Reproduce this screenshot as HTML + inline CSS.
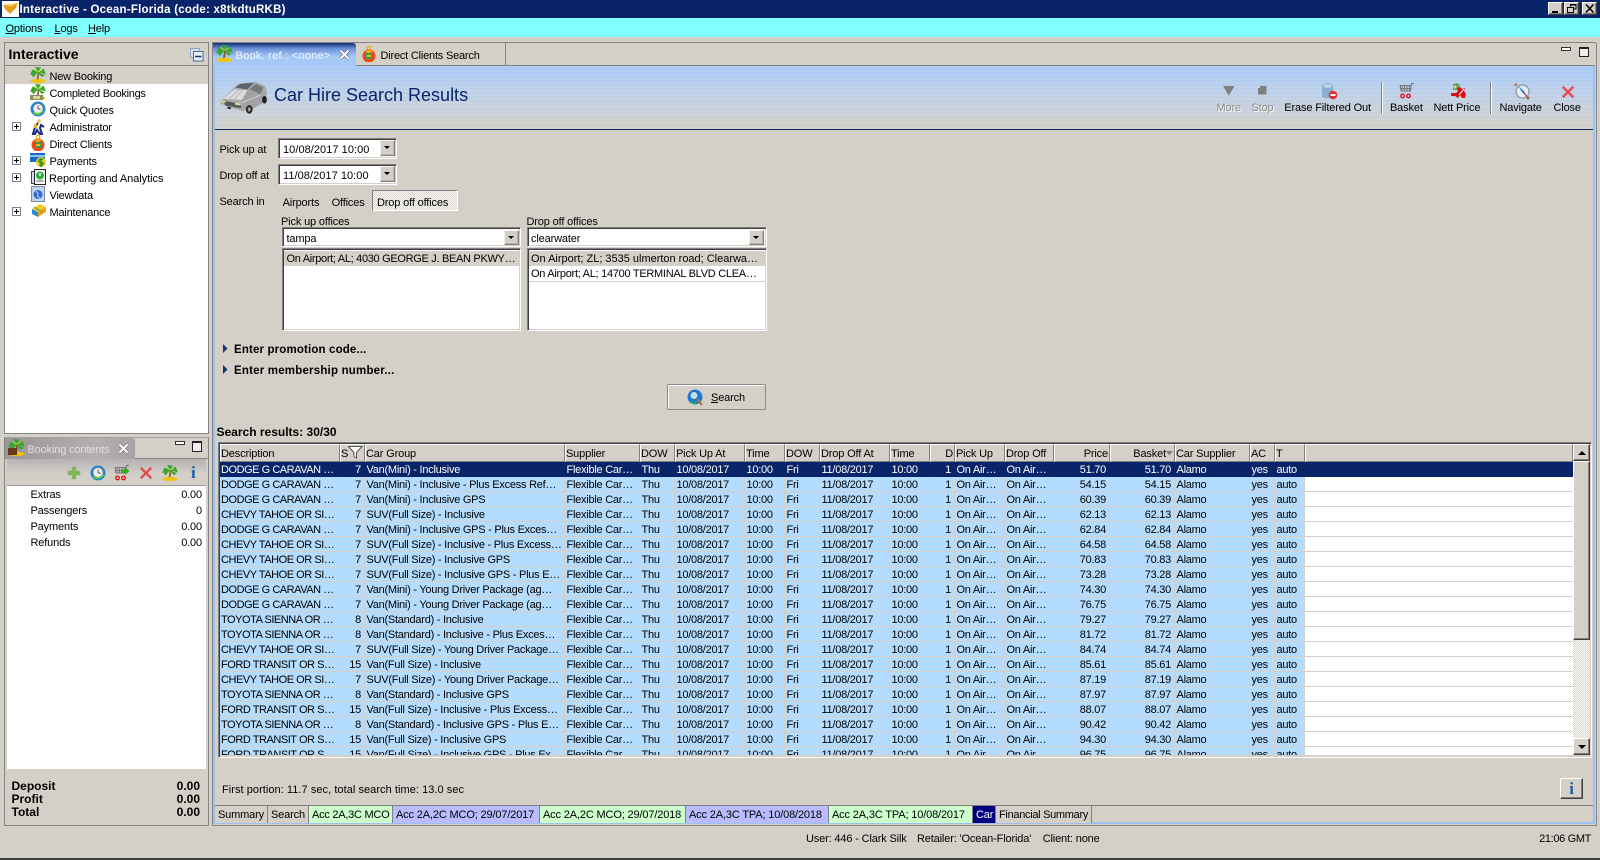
<!DOCTYPE html>
<html><head><meta charset="utf-8"><title>Interactive</title>
<style>
html,body{margin:0;padding:0;width:1600px;height:860px;overflow:hidden;background:#d4d0c8}
body{position:relative;font:11px/16px "Liberation Sans",sans-serif;color:#000;letter-spacing:-.15px}
.a{position:absolute;white-space:nowrap}
.b{font-weight:bold;letter-spacing:0;line-height:14px}
.btn{position:absolute;background:#d4d0c8;box-sizing:border-box;border:1px solid;border-color:#fff #404040 #404040 #fff;box-shadow:inset -1px -1px 0 #808080}
.sb{border-color:#f4f2ee #808080 #808080 #f4f2ee;box-shadow:inset -1px -1px 0 #b8b4ac}
.inset{position:absolute;box-sizing:border-box;border:1px solid;border-color:#808080 #fff #fff #808080;box-shadow:inset 1px 1px 0 #404040,inset -1px -1px 0 #d4d0c8;background:#fff}
.tri{position:absolute;width:0;height:0;border:3px solid transparent;border-top:3px solid #000;border-bottom:0}
.plus{position:absolute;left:12px;width:9px;height:9px;box-sizing:border-box;border:1px solid #808080;background:#fff}
.plus:before{content:"";position:absolute;left:1px;top:3px;width:5px;height:1px;background:#000}
.plus:after{content:"";position:absolute;left:3px;top:1px;width:1px;height:5px;background:#000}
.h{position:absolute;top:444px;height:18px;box-sizing:border-box;border:1px solid;border-color:#fff #808080 #808080 #fff;padding:1px 1px 0 0;line-height:17px;overflow:hidden;white-space:nowrap;background:#d4d0c8}
.grid{position:absolute;left:220px;top:462px;width:1353px;height:293px;overflow:hidden;background:#fff}
table{border-collapse:separate;border-spacing:0;table-layout:fixed;width:1353px;background:#fff}
td{height:12px;padding:2px 0 0 1.5px;line-height:12px;letter-spacing:-.25px;border-right:1px solid #d4d0c8;border-bottom:1px solid #d4d0c8;background:#b4dcff;overflow:hidden;white-space:nowrap}
td:first-child{letter-spacing:-.46px;padding-left:1px}
td.r{text-align:right;padding:2px 3px 0 0}
td.e{background:#fff;border-right:0}
tr.s td{background:#0a246a;color:#fff;border-color:#0a246a}
.bt{position:absolute;top:806px;height:17px;box-sizing:border-box;border-right:1px solid #808080;line-height:18px;padding-left:3px;white-space:nowrap;overflow:hidden}
.tb{position:absolute;top:100px;white-space:nowrap}
.dis{color:#8a8a8a;text-shadow:1px 1px 0 #fff}
</style></head><body>
<svg width="0" height="0" style="position:absolute">
<defs>
<symbol id="palm" viewBox="0 0 16 16"><path d="M8.500 5Q8.500 9 7.200 13" stroke="#8a5a20" stroke-width="1.700" fill="none"/><path d="M8 5L0 8 2.500 2.500ZM8 5L5 0 11 .5ZM8 5L16 7.500 13.500 1.500ZM8 5L11.500 10 15 8.500ZM8 5L3.500 10.500 1.500 7.500Z" fill="#3aa52e"/><path d="M8 5L4 2M8 5L12 3" stroke="#a8d84e"/><ellipse cx="8" cy="14" rx="7.500" ry="2" fill="#f2c400"/></symbol>
<symbol id="clock" viewBox="0 0 16 16"><circle cx="8" cy="8" r="7.500" fill="#1c86e0"/><circle cx="8" cy="7.500" r="5" fill="#eee" stroke="#777" stroke-width=".7"/><path d="M8 4.500V7.500L10.500 8.500" stroke="#555" fill="none"/><path d="M2.500 12Q8 17 14.500 10L13 9Q8 14 4 10.500Z" fill="#6cc03a"/></symbol>
<symbol id="redx" viewBox="0 0 16 16"><path d="M3 1L8 6 13 1 15 3 10 8 15 13 13 15 8 10 3 15 1 13 6 8 1 3Z" fill="#e8434a" stroke="#c9a0a0" stroke-width=".6"/></symbol>
<symbol id="cart" viewBox="0 0 16 16"><path d="M15 .5H12.500L11.500 8H2M1 2.500H12.500M2 5.500H12M3 2.500V8M5.500 2.500V8M8 2.500V8M10.500 2.500V8M1 2.500L2 8" stroke="#777" fill="none"/><circle cx="3.500" cy="13" r="1.800" fill="none" stroke="#e00000" stroke-width="1.200"/><circle cx="9.500" cy="13" r="1.800" fill="none" stroke="#e00000" stroke-width="1.200"/></symbol>
<symbol id="client" viewBox="0 0 16 16"><circle cx="8" cy="2.200" r="1.800" fill="none" stroke="#e8a800" stroke-width="1.100"/><circle cx="8" cy="10" r="6.500" fill="#ef4b16"/><rect x="5" y="7" width="6" height="6" fill="#3c9a50"/><rect x="6" y="9" width="4" height="2" fill="#e8c010"/><ellipse cx="8" cy="5.500" rx="3" ry="1.500" fill="#f4b000"/></symbol>
</defs></svg>

<!-- title bar -->
<div class="a" style="left:0;top:0;width:1600px;height:18px;background:#0a246a"></div>
<div class="a" style="left:2px;top:1px;width:17px;height:16px;background:#fff"></div>
<svg class="a" style="left:3px;top:3px" width="15" height="12"><path d="M0 2L14.500 0 13 5 7 11 2 6Z" fill="#e89a18"/><path d="M1 2L14 .5 8 3.500Z" fill="#f6d070"/></svg>
<div class="a b" style="left:19.500px;top:3px;color:#fff;font-size:11.500px;line-height:14px;letter-spacing:.23px">Interactive - Ocean-Florida (code: x8tkdtuRKB)</div>
<div class="btn" style="left:1548px;top:2px;width:15px;height:13px"><div class="a" style="left:3px;top:8px;width:6px;height:2px;background:#000"></div></div>
<div class="btn" style="left:1564px;top:2px;width:15px;height:13px"><svg class="a" style="left:2px;top:1px" width="10" height="9"><path d="M3.500 2.500V.5H9V5H7M.5 3.500H6.500V8.500H.5Z" fill="none" stroke="#000"/><path d="M3 1H9M0 3.500H6.500" stroke="#000"/></svg></div>
<div class="btn" style="left:1582px;top:2px;width:15px;height:13px"><svg class="a" style="left:2px;top:1px" width="10" height="9"><path d="M1 .5L8.500 8.500M8.500 .5L1 8.500" stroke="#000" stroke-width="1.500"/></svg></div>

<!-- menu -->
<div class="a" style="left:0;top:18px;width:1600px;height:19px;background:#80ffff"></div>
<div class="a" style="left:5.500px;top:21px"><u>O</u>ptions</div>
<div class="a" style="left:54.500px;top:21px"><u>L</u>ogs</div>
<div class="a" style="left:88px;top:21px"><u>H</u>elp</div>

<!-- left panel -->
<div class="a" style="left:4px;top:42px;width:203px;height:390px;border:1px solid #848484;background:#fff"></div>
<div class="a" style="left:5px;top:43px;width:203px;height:22px;background:#d4d0c8;border-bottom:1px solid #848484"></div>
<div class="a b" style="left:8.500px;top:47px;font-size:14px;line-height:15px">Interactive</div>
<svg class="a" style="left:190px;top:48px" width="14" height="14"><rect x=".5" y=".5" width="9" height="9" fill="#d8e4f0" stroke="#8aa4c8"/><rect x="3.500" y="3.500" width="9.500" height="9.500" fill="#e8eef6" stroke="#4a6a9a"/><path d="M5 8.500H11.500" stroke="#16346a" stroke-width="1.500"/></svg>
<div class="a" style="left:5px;top:66px;width:203px;height:18px;background:#d4d0c8"></div>
<svg class="a" style="left:30px;top:67px" width="16" height="16"><use href="#palm"/></svg>
<svg class="a" style="left:30px;top:84px" width="16" height="16"><use href="#palm"/><rect x="0" y="11" width="13" height="5" fill="#8a8a5c"/><rect x="3" y="12" width="7" height="3" fill="#d0d8a0"/></svg>
<svg class="a" style="left:30px;top:101px" width="16" height="16"><use href="#clock"/></svg>
<svg class="a" style="left:31px;top:119px" width="16" height="16"><path d="M7 4L4 8 2 15H4L6 11 9 15H11L9 9 10 6 13 8" stroke="#1c2a7a" stroke-width="2" fill="none"/><circle cx="8" cy="2" r="1.800" fill="#e8c070"/><rect x="3" y="5" width="3" height="4" fill="#e0b030"/></svg>
<svg class="a" style="left:30px;top:135px" width="16" height="16"><use href="#client"/></svg>
<svg class="a" style="left:30px;top:152px" width="16" height="17"><rect x="0" y="1" width="15" height="9" fill="#1a6cc8"/><rect x="0" y="3" width="15" height="2" fill="#8ac4f0"/><circle cx="11" cy="10" r="5" fill="#e8d020"/><path d="M13 7.500H10Q8.500 7.500 9 9.500Q9.500 10.500 11 10.500Q13 10.500 13 12Q13 13 11 13H9M11 6V15" stroke="#1c8c28" fill="none" stroke-width="1.300"/></svg>
<svg class="a" style="left:31px;top:169px" width="16" height="17"><rect x=".5" y="2.500" width="6" height="12" fill="#d0e0f0" stroke="#445"/><rect x="3.500" y=".5" width="11" height="15" fill="#f4f4f4" stroke="#222"/><circle cx="9" cy="6.500" r="4" fill="#30b040"/><path d="M9 4V7" stroke="#fff" stroke-width="1.500"/><path d="M5.500 12H12.500" stroke="#666"/></svg>
<svg class="a" style="left:31px;top:186px" width="15" height="17"><rect x=".5" y=".5" width="13" height="15" fill="#c4d4ea" stroke="#7a8aaa"/><circle cx="7" cy="8.500" r="4.500" fill="#3a6cd0"/><path d="M5 5.500Q8 7 6.500 10L9 12.500" stroke="#a0d8ff" fill="none"/></svg>
<svg class="a" style="left:31px;top:203px" width="16" height="16"><path d="M1 6L9 1 15 4 7 9Z" fill="#f0c828"/><path d="M1 6L7 9V14L1 11Z" fill="#2a8ad0"/><path d="M7 9L15 4V9L7 14Z" fill="#e8a020"/><path d="M3 4L11 9" stroke="#58a830"/></svg>
<div class="plus" style="top:122px"></div><div class="plus" style="top:156px"></div><div class="plus" style="top:173px"></div><div class="plus" style="top:207px"></div>
<div class="a" style="left:49.500px;top:69px;letter-spacing:-.2px">New Booking</div>
<div class="a" style="left:49.500px;top:86px;letter-spacing:-.3px">Completed Bookings</div>
<div class="a" style="left:49.500px;top:103px;letter-spacing:-.2px">Quick Quotes</div>
<div class="a" style="left:49.500px;top:120px;letter-spacing:-.2px">Administrator</div>
<div class="a" style="left:49.500px;top:137px;letter-spacing:-.2px">Direct Clients</div>
<div class="a" style="left:49.500px;top:154px;letter-spacing:-.2px">Payments</div>
<div class="a" style="left:49px;top:171px;letter-spacing:-.05px">Reporting and Analytics</div>
<div class="a" style="left:49.500px;top:188px;letter-spacing:-.2px">Viewdata</div>
<div class="a" style="left:49.500px;top:205px;letter-spacing:-.2px">Maintenance</div>

<!-- booking contents -->
<div class="a" style="left:4px;top:437px;width:203px;height:387px;border:1px solid #848484;border-top-color:#a0a0a0;background:#d4d0c8"></div>
<div class="a" style="left:5px;top:438px;width:130px;height:21px;background:linear-gradient(90deg,#9a9696,#b4b0b0 70%,#a8a4a4);border-top-right-radius:3px"></div>
<div class="a" style="left:135px;top:458px;width:73px;height:1px;background:#848484"></div>
<svg class="a" style="left:8px;top:439px" width="17" height="17"><use href="#palm"/><rect x="0" y="9" width="9" height="7" fill="#6a3a1a"/></svg>
<div class="a" style="left:27.500px;top:442px;color:#e0dedc">Booking contents</div>
<svg class="a" style="left:118px;top:443px" width="11" height="11"><path d="M1.500 1.500L9.500 9.500M9.500 1.500L1.500 9.500" stroke="#777" stroke-width="3.400"/><path d="M1.500 1.500L9.500 9.500M9.500 1.500L1.500 9.500" stroke="#fff" stroke-width="2"/></svg>
<div class="a" style="left:175px;top:441px;width:8px;height:2px;border:1px solid #333;background:#fff"></div>
<div class="a" style="left:192px;top:441px;width:8px;height:8px;border:1px solid #222;border-top-width:2px;background:#eee"></div>
<div class="a" style="left:7px;top:459px;width:199px;height:26px;background:linear-gradient(#b4b2b4,#d4d0c8 60%);border-bottom:1px solid #9a9a9a"></div>
<svg class="a" style="left:67px;top:466px" width="14" height="14"><path d="M5 1H9V5H13V9H9V13H5V9H1V5H5Z" fill="#7ab850" stroke="#9aa88a" stroke-width=".6"/></svg>
<svg class="a" style="left:90px;top:465px" width="16" height="16"><use href="#clock"/></svg>
<svg class="a" style="left:114px;top:465px" width="16" height="16"><use href="#cart"/><path d="M7 4.500H11V2L15.500 6 11 10V7.500H7Z" fill="#2cb020"/></svg>
<svg class="a" style="left:139px;top:466px" width="14" height="14"><use href="#redx"/></svg>
<svg class="a" style="left:162px;top:465px" width="16" height="16"><use href="#palm"/></svg>
<div class="a" style="left:191px;top:465px;width:7px;height:16px;color:#1a5caa;font:bold 17px/16px 'Liberation Serif',serif">i</div>
<div class="a" style="left:7px;top:486px;width:199px;height:283px;background:#fff"></div>
<div class="a" style="left:30.500px;top:487px">Extras</div><div class="a" style="right:1398px;top:487px">0.00</div>
<div class="a" style="left:30.500px;top:503px">Passengers</div><div class="a" style="right:1398px;top:503px">0</div>
<div class="a" style="left:30.500px;top:519px">Payments</div><div class="a" style="right:1398px;top:519px">0.00</div>
<div class="a" style="left:30.500px;top:535px">Refunds</div><div class="a" style="right:1398px;top:535px">0.00</div>
<div class="a b" style="left:11.500px;top:779px;font-size:12px">Deposit</div><div class="a b" style="right:1400px;top:779px;font-size:12px">0.00</div>
<div class="a b" style="left:11.500px;top:792px;font-size:12px">Profit</div><div class="a b" style="right:1400px;top:792px;font-size:12px">0.00</div>
<div class="a b" style="left:11.500px;top:805px;font-size:12px">Total</div><div class="a b" style="right:1400px;top:805px;font-size:12px">0.00</div>

<!-- right panel -->
<div class="a" style="left:212px;top:42px;width:1383px;height:782px;border:1px solid #848484;border-top-right-radius:3px;background:#d4d0c8"></div>
<div class="a" style="left:213px;top:65px;width:1382px;height:1px;background:#848484"></div>
<div class="a" style="left:213px;top:66px;width:2px;height:758px;background:#9cc0f0"></div>
<div class="a" style="left:1593px;top:66px;width:2px;height:758px;background:#9cc0f0"></div>
<div class="a" style="left:213px;top:822px;width:1382px;height:2px;background:#9cc0f0"></div>
<div class="a" style="left:213px;top:43px;width:143px;height:23px;background:linear-gradient(#0f2d78,#6f93d8 25%,#a6c8f6 60%);border-top-right-radius:3px"></div>
<svg class="a" style="left:216px;top:45px" width="17" height="17"><use href="#palm"/></svg>
<div class="a" style="left:235.500px;top:48px;color:#f4f7fc;letter-spacing:.25px">Book. ref.: &lt;none&gt;</div>
<svg class="a" style="left:339px;top:49px" width="11" height="11"><path d="M1.500 1.500L9.500 9.500M9.500 1.500L1.500 9.500" stroke="#667" stroke-width="3.400"/><path d="M1.500 1.500L9.500 9.500M9.500 1.500L1.500 9.500" stroke="#fff" stroke-width="2"/></svg>
<div class="a" style="left:356px;top:43px;width:149px;height:22px;border-right:1px solid #848484"></div>
<svg class="a" style="left:361px;top:46px" width="16" height="16"><use href="#client"/></svg>
<div class="a" style="left:380.500px;top:48px;letter-spacing:-.2px">Direct Clients Search</div>
<div class="a" style="left:1561px;top:47px;width:8px;height:2px;border:1px solid #333;background:#fff"></div>
<div class="a" style="left:1579px;top:47px;width:8px;height:7px;border:1px solid #222;border-top-width:2px;background:#eee"></div>

<!-- banner -->
<div class="a" style="left:215px;top:66px;width:1378px;height:63px;background:repeating-linear-gradient(rgba(255,255,255,.07) 0 2px,rgba(0,0,0,0) 2px 4px),linear-gradient(#a6c8f6,#bcd0ea 40%,#d4d0c8)"></div>
<div class="a" style="left:215px;top:129px;width:1378px;height:1px;background:#0a246a"></div>
<svg class="a" style="left:216px;top:73px" width="57" height="48" viewBox="0 0 60 50"><path d="M5 30L18 16 24 11 42 9 52 14 54 20 52 30 38 38 28 40 12 35 5 32Z" fill="#a8aaac"/><path d="M20 15L26 11 40 10 33 17Z" fill="#5c6268"/><path d="M35 17L42 11 50 15 47 22Z" fill="#74797f"/><path d="M8 27L19 17 33 18 27 28Z" fill="#dcdcdc"/><path d="M14 27L24 17.500M19 28L28 18" stroke="#b4b6b8" fill="none"/><path d="M27 30L34 18 47 22 52 20 52 29 38 36 29 38Z" fill="#a0a2a4"/><path d="M27 31L47 23" stroke="#d0d2d4"/><path d="M7 29L26 32 27 37 10 34Z" fill="#55585c"/><path d="M6 28.500L10 29.500 10 31.500 6 30.500Z" fill="#e8d860"/><path d="M20 31L26 32 26 34 20 33Z" fill="#dce8a0"/><ellipse cx="35" cy="38" rx="3.500" ry="4.500" fill="#222"/><ellipse cx="35" cy="38" rx="1.600" ry="2.400" fill="#999"/><ellipse cx="51" cy="28" rx="2.500" ry="4" fill="#222"/><path d="M12 35L16 36 15 38 12 37Z" fill="#222"/></svg>
<div class="a" style="left:274px;top:85px;font-size:18px;line-height:20px;color:#0a246a;letter-spacing:0">Car Hire Search Results</div>

<svg class="a" style="left:1223px;top:86px" width="12" height="10"><path d="M0 0H11.500L5.800 9.500Z" fill="#808080"/></svg>
<svg class="a" style="left:1258px;top:86px" width="9" height="9"><rect width="8.500" height="8.500" fill="#808080"/><rect width="2" height="2" fill="#d8d8d8"/></svg>
<svg class="a" style="left:1321px;top:83px" width="17" height="17"><path d="M1 3V14Q6 16.500 12 14V3Z" fill="#8eb0d0"/><ellipse cx="6.500" cy="3" rx="5.500" ry="2.300" fill="#b8d4ea" stroke="#7a98b8" stroke-width=".6"/><circle cx="12" cy="12" r="4.300" fill="#e03030"/><rect x="9.500" y="11" width="5" height="2" fill="#fff"/></svg>
<svg class="a" style="left:1399px;top:83px" width="16" height="16"><use href="#cart"/></svg>
<svg class="a" style="left:1450px;top:83px" width="17" height="16"><path d="M3 1Q8-1 10 2L8 7H3Z" fill="#6aa050"/><circle cx="5" cy="4" r="1.500" fill="#c8d8a0"/><path d="M7 5L10 4 12 6 15 5 14 8 16 11 15 15H12L10 12 8 15 5 13H1V10H6L8 8Z" fill="#e00c14"/><path d="M9 12L14 6" stroke="#fff"/></svg>
<svg class="a" style="left:1514px;top:83px" width="17" height="17"><circle cx="8.500" cy="8.500" r="6.500" fill="#e4ecf4" stroke="#8a9aaa" stroke-width="1.300"/><path d="M4 3L8 9 13 14 9 7Z" fill="#2a88d8"/><path d="M9 8L13 14" stroke="#d02020"/><circle cx="1.800" cy="1.800" r="1.500" fill="#b08a40"/><circle cx="14" cy="15" r="1.500" fill="#807040"/></svg>
<svg class="a" style="left:1561px;top:85px" width="14" height="14"><use href="#redx"/></svg>
<div class="tb dis" style="left:1216.500px">More</div>
<div class="tb dis" style="left:1251.500px">Stop</div>
<div class="tb" style="left:1284.300px">Erase Filtered Out</div>
<div class="tb" style="left:1390px">Basket</div>
<div class="tb" style="left:1433.500px">Nett Price</div>
<div class="tb" style="left:1499.500px">Navigate</div>
<div class="tb" style="left:1553.500px">Close</div>
<div class="a" style="left:1381px;top:82px;width:1px;height:32px;background:#808080;border-right:1px solid #fff"></div>
<div class="a" style="left:1490px;top:82px;width:1px;height:32px;background:#808080;border-right:1px solid #fff"></div>

<!-- form -->
<div class="a" style="left:219.500px;top:142px">Pick up at</div>
<div class="a" style="left:219.500px;top:168px">Drop off at</div>
<div class="a" style="left:219.500px;top:194px">Search in</div>
<div class="inset" style="left:278px;top:138px;width:119px;height:21px"></div>
<div class="a" style="left:283px;top:142px;letter-spacing:.05px">10/08/2017 10:00</div>
<div class="btn sb" style="left:380px;top:140px;width:15px;height:16px"><div class="tri" style="left:3px;top:5px"></div></div>
<div class="inset" style="left:278px;top:164px;width:119px;height:21px"></div>
<div class="a" style="left:283px;top:168px;letter-spacing:.05px">11/08/2017 10:00</div>
<div class="btn sb" style="left:380px;top:166px;width:15px;height:16px"><div class="tri" style="left:3px;top:5px"></div></div>
<div class="a" style="left:282.600px;top:195px">Airports</div>
<div class="a" style="left:331.600px;top:195px">Offices</div>
<div class="a" style="left:372px;top:190px;width:86px;height:21px;box-sizing:border-box;border:1px solid;border-color:#808080 #fff #fff #808080;background:repeating-conic-gradient(#fff 0 25%,#d4d0c8 0 50%) 0 0/2px 2px"></div>
<div class="a" style="left:377px;top:195px">Drop off offices</div>
<div class="a" style="left:281px;top:214px">Pick up offices</div>
<div class="a" style="left:526.500px;top:214px">Drop off offices</div>
<div class="inset" style="left:282px;top:227px;width:239px;height:20px"></div>
<div class="a" style="left:286.500px;top:231px">tampa</div>
<div class="btn sb" style="left:504px;top:230px;width:15px;height:15px"><div class="tri" style="left:3px;top:5px"></div></div>
<div class="inset" style="left:527px;top:227px;width:240px;height:20px"></div>
<div class="a" style="left:531px;top:231px">clearwater</div>
<div class="btn sb" style="left:749px;top:230px;width:15px;height:15px"><div class="tri" style="left:3px;top:5px"></div></div>
<div class="inset" style="left:282px;top:248px;width:239px;height:83px"></div>
<div class="a" style="left:284px;top:251px;width:235px;height:15px;background:#d4d0c8"></div>
<div class="a" style="left:286.500px;top:251px;letter-spacing:-.31px">On Airport; AL; 4030 GEORGE J. BEAN PKWY…</div>
<div class="inset" style="left:527px;top:248px;width:240px;height:83px"></div>
<div class="a" style="left:529px;top:251px;width:236px;height:15px;background:#d4d0c8"></div>
<div class="a" style="left:531px;top:251px;letter-spacing:-.01px">On Airport; ZL; 3535 ulmerton road; Clearwa…</div>
<div class="a" style="left:529px;top:281px;width:236px;height:1px;background:#d4d0c8"></div>
<div class="a" style="left:531px;top:266px;letter-spacing:-.28px">On Airport; AL; 14700 TERMINAL BLVD CLEA…</div>

<svg class="a" style="left:222px;top:344px" width="6" height="9"><path d="M1 0L5.500 4.500 1 9Z" fill="#16346a"/></svg>
<div class="a b" style="left:234px;top:343px;font-size:11.500px;letter-spacing:.15px">Enter promotion code...</div>
<svg class="a" style="left:222px;top:365px" width="6" height="9"><path d="M1 0L5.500 4.500 1 9Z" fill="#16346a"/></svg>
<div class="a b" style="left:234px;top:364px;font-size:11.500px;letter-spacing:.2px">Enter membership number...</div>

<div class="a" style="left:667px;top:384px;width:99px;height:26px;box-sizing:border-box;border:1px solid #8a8a8a;border-radius:2px;box-shadow:inset 1px 1px 0 #fff"></div>
<svg class="a" style="left:687px;top:389px" width="17" height="17"><circle cx="8" cy="8" r="7.500" fill="#1c7ed8"/><circle cx="7" cy="6.500" r="4" fill="#bfe0f4" stroke="#2a6a9a"/><path d="M10 10L15 16" stroke="#b07828" stroke-width="2.200"/><path d="M3 13Q6 15 9 14" stroke="#40b040" stroke-width="1.600" fill="none"/></svg>
<div class="a" style="left:711px;top:390px"><u>S</u>earch</div>

<div class="a b" style="left:216.500px;top:425px;font-size:12px">Search results: 30/30</div>

<!-- grid -->
<div class="inset" style="left:218px;top:442px;width:1374px;height:316px;background:#d4d0c8"></div>
<div class="h" style="left:220px;width:120px">Description</div>
<div class="h" style="left:340px;width:25px">S<svg style="position:absolute;left:7px;top:1px" width="15" height="13"><path d="M.5.5H14L8.500 6.500V12L6 10.500V6.500Z" fill="#fff" stroke="#555"/></svg></div>
<div class="h" style="left:365px;width:200px">Car Group</div>
<div class="h" style="left:565px;width:75px">Supplier</div>
<div class="h" style="left:640px;width:35px">DOW</div>
<div class="h" style="left:675px;width:70px">Pick Up At</div>
<div class="h" style="left:745px;width:40px">Time</div>
<div class="h" style="left:785px;width:35px">DOW</div>
<div class="h" style="left:820px;width:70px">Drop Off At</div>
<div class="h" style="left:890px;width:40px">Time</div>
<div class="h" style="left:930px;width:25px;text-align:right">D</div>
<div class="h" style="left:955px;width:50px">Pick Up</div>
<div class="h" style="left:1005px;width:49px">Drop Off</div>
<div class="h" style="left:1054px;width:56px;text-align:right">Price</div>
<div class="h" style="left:1110px;width:65px;text-align:right;padding-right:8px">Basket<svg style="position:absolute;right:1px;top:6px" width="7" height="5"><path d="M0 0H7L3.500 4.500Z" fill="#808080"/></svg></div>
<div class="h" style="left:1175px;width:75px">Car Supplier</div>
<div class="h" style="left:1250px;width:25px">AC</div>
<div class="h" style="left:1275px;width:30px">T</div>
<div class="h" style="left:1305px;width:268px"></div>
<div class="grid"><table>
<colgroup><col style="width:120px"><col style="width:25px"><col style="width:200px"><col style="width:75px"><col style="width:35px"><col style="width:70px"><col style="width:40px"><col style="width:35px"><col style="width:70px"><col style="width:40px"><col style="width:25px"><col style="width:50px"><col style="width:49px"><col style="width:56px"><col style="width:65px"><col style="width:75px"><col style="width:25px"><col style="width:30px"><col></colgroup>
<tr class="s"><td>DODGE G CARAVAN …</td><td class="r">7</td><td>Van(Mini) - Inclusive</td><td>Flexible Car…</td><td>Thu</td><td>10/08/2017</td><td>10:00</td><td>Fri</td><td>11/08/2017</td><td>10:00</td><td class="r">1</td><td>On Air…</td><td>On Air…</td><td class="r">51.70</td><td class="r">51.70</td><td>Alamo</td><td>yes</td><td>auto</td><td class="e"></td></tr>
<tr><td>DODGE G CARAVAN …</td><td class="r">7</td><td>Van(Mini) - Inclusive - Plus Excess Ref…</td><td>Flexible Car…</td><td>Thu</td><td>10/08/2017</td><td>10:00</td><td>Fri</td><td>11/08/2017</td><td>10:00</td><td class="r">1</td><td>On Air…</td><td>On Air…</td><td class="r">54.15</td><td class="r">54.15</td><td>Alamo</td><td>yes</td><td>auto</td><td class="e"></td></tr>
<tr><td>DODGE G CARAVAN …</td><td class="r">7</td><td>Van(Mini) - Inclusive GPS</td><td>Flexible Car…</td><td>Thu</td><td>10/08/2017</td><td>10:00</td><td>Fri</td><td>11/08/2017</td><td>10:00</td><td class="r">1</td><td>On Air…</td><td>On Air…</td><td class="r">60.39</td><td class="r">60.39</td><td>Alamo</td><td>yes</td><td>auto</td><td class="e"></td></tr>
<tr><td>CHEVY TAHOE OR SI…</td><td class="r">7</td><td>SUV(Full Size) - Inclusive</td><td>Flexible Car…</td><td>Thu</td><td>10/08/2017</td><td>10:00</td><td>Fri</td><td>11/08/2017</td><td>10:00</td><td class="r">1</td><td>On Air…</td><td>On Air…</td><td class="r">62.13</td><td class="r">62.13</td><td>Alamo</td><td>yes</td><td>auto</td><td class="e"></td></tr>
<tr><td>DODGE G CARAVAN …</td><td class="r">7</td><td>Van(Mini) - Inclusive GPS - Plus Exces…</td><td>Flexible Car…</td><td>Thu</td><td>10/08/2017</td><td>10:00</td><td>Fri</td><td>11/08/2017</td><td>10:00</td><td class="r">1</td><td>On Air…</td><td>On Air…</td><td class="r">62.84</td><td class="r">62.84</td><td>Alamo</td><td>yes</td><td>auto</td><td class="e"></td></tr>
<tr><td>CHEVY TAHOE OR SI…</td><td class="r">7</td><td>SUV(Full Size) - Inclusive - Plus Excess…</td><td>Flexible Car…</td><td>Thu</td><td>10/08/2017</td><td>10:00</td><td>Fri</td><td>11/08/2017</td><td>10:00</td><td class="r">1</td><td>On Air…</td><td>On Air…</td><td class="r">64.58</td><td class="r">64.58</td><td>Alamo</td><td>yes</td><td>auto</td><td class="e"></td></tr>
<tr><td>CHEVY TAHOE OR SI…</td><td class="r">7</td><td>SUV(Full Size) - Inclusive GPS</td><td>Flexible Car…</td><td>Thu</td><td>10/08/2017</td><td>10:00</td><td>Fri</td><td>11/08/2017</td><td>10:00</td><td class="r">1</td><td>On Air…</td><td>On Air…</td><td class="r">70.83</td><td class="r">70.83</td><td>Alamo</td><td>yes</td><td>auto</td><td class="e"></td></tr>
<tr><td>CHEVY TAHOE OR SI…</td><td class="r">7</td><td>SUV(Full Size) - Inclusive GPS - Plus E…</td><td>Flexible Car…</td><td>Thu</td><td>10/08/2017</td><td>10:00</td><td>Fri</td><td>11/08/2017</td><td>10:00</td><td class="r">1</td><td>On Air…</td><td>On Air…</td><td class="r">73.28</td><td class="r">73.28</td><td>Alamo</td><td>yes</td><td>auto</td><td class="e"></td></tr>
<tr><td>DODGE G CARAVAN …</td><td class="r">7</td><td>Van(Mini) - Young Driver Package (ag…</td><td>Flexible Car…</td><td>Thu</td><td>10/08/2017</td><td>10:00</td><td>Fri</td><td>11/08/2017</td><td>10:00</td><td class="r">1</td><td>On Air…</td><td>On Air…</td><td class="r">74.30</td><td class="r">74.30</td><td>Alamo</td><td>yes</td><td>auto</td><td class="e"></td></tr>
<tr><td>DODGE G CARAVAN …</td><td class="r">7</td><td>Van(Mini) - Young Driver Package (ag…</td><td>Flexible Car…</td><td>Thu</td><td>10/08/2017</td><td>10:00</td><td>Fri</td><td>11/08/2017</td><td>10:00</td><td class="r">1</td><td>On Air…</td><td>On Air…</td><td class="r">76.75</td><td class="r">76.75</td><td>Alamo</td><td>yes</td><td>auto</td><td class="e"></td></tr>
<tr><td>TOYOTA SIENNA OR …</td><td class="r">8</td><td>Van(Standard) - Inclusive</td><td>Flexible Car…</td><td>Thu</td><td>10/08/2017</td><td>10:00</td><td>Fri</td><td>11/08/2017</td><td>10:00</td><td class="r">1</td><td>On Air…</td><td>On Air…</td><td class="r">79.27</td><td class="r">79.27</td><td>Alamo</td><td>yes</td><td>auto</td><td class="e"></td></tr>
<tr><td>TOYOTA SIENNA OR …</td><td class="r">8</td><td>Van(Standard) - Inclusive - Plus Exces…</td><td>Flexible Car…</td><td>Thu</td><td>10/08/2017</td><td>10:00</td><td>Fri</td><td>11/08/2017</td><td>10:00</td><td class="r">1</td><td>On Air…</td><td>On Air…</td><td class="r">81.72</td><td class="r">81.72</td><td>Alamo</td><td>yes</td><td>auto</td><td class="e"></td></tr>
<tr><td>CHEVY TAHOE OR SI…</td><td class="r">7</td><td>SUV(Full Size) - Young Driver Package…</td><td>Flexible Car…</td><td>Thu</td><td>10/08/2017</td><td>10:00</td><td>Fri</td><td>11/08/2017</td><td>10:00</td><td class="r">1</td><td>On Air…</td><td>On Air…</td><td class="r">84.74</td><td class="r">84.74</td><td>Alamo</td><td>yes</td><td>auto</td><td class="e"></td></tr>
<tr><td>FORD TRANSIT OR S…</td><td class="r">15</td><td>Van(Full Size) - Inclusive</td><td>Flexible Car…</td><td>Thu</td><td>10/08/2017</td><td>10:00</td><td>Fri</td><td>11/08/2017</td><td>10:00</td><td class="r">1</td><td>On Air…</td><td>On Air…</td><td class="r">85.61</td><td class="r">85.61</td><td>Alamo</td><td>yes</td><td>auto</td><td class="e"></td></tr>
<tr><td>CHEVY TAHOE OR SI…</td><td class="r">7</td><td>SUV(Full Size) - Young Driver Package…</td><td>Flexible Car…</td><td>Thu</td><td>10/08/2017</td><td>10:00</td><td>Fri</td><td>11/08/2017</td><td>10:00</td><td class="r">1</td><td>On Air…</td><td>On Air…</td><td class="r">87.19</td><td class="r">87.19</td><td>Alamo</td><td>yes</td><td>auto</td><td class="e"></td></tr>
<tr><td>TOYOTA SIENNA OR …</td><td class="r">8</td><td>Van(Standard) - Inclusive GPS</td><td>Flexible Car…</td><td>Thu</td><td>10/08/2017</td><td>10:00</td><td>Fri</td><td>11/08/2017</td><td>10:00</td><td class="r">1</td><td>On Air…</td><td>On Air…</td><td class="r">87.97</td><td class="r">87.97</td><td>Alamo</td><td>yes</td><td>auto</td><td class="e"></td></tr>
<tr><td>FORD TRANSIT OR S…</td><td class="r">15</td><td>Van(Full Size) - Inclusive - Plus Excess…</td><td>Flexible Car…</td><td>Thu</td><td>10/08/2017</td><td>10:00</td><td>Fri</td><td>11/08/2017</td><td>10:00</td><td class="r">1</td><td>On Air…</td><td>On Air…</td><td class="r">88.07</td><td class="r">88.07</td><td>Alamo</td><td>yes</td><td>auto</td><td class="e"></td></tr>
<tr><td>TOYOTA SIENNA OR …</td><td class="r">8</td><td>Van(Standard) - Inclusive GPS - Plus E…</td><td>Flexible Car…</td><td>Thu</td><td>10/08/2017</td><td>10:00</td><td>Fri</td><td>11/08/2017</td><td>10:00</td><td class="r">1</td><td>On Air…</td><td>On Air…</td><td class="r">90.42</td><td class="r">90.42</td><td>Alamo</td><td>yes</td><td>auto</td><td class="e"></td></tr>
<tr><td>FORD TRANSIT OR S…</td><td class="r">15</td><td>Van(Full Size) - Inclusive GPS</td><td>Flexible Car…</td><td>Thu</td><td>10/08/2017</td><td>10:00</td><td>Fri</td><td>11/08/2017</td><td>10:00</td><td class="r">1</td><td>On Air…</td><td>On Air…</td><td class="r">94.30</td><td class="r">94.30</td><td>Alamo</td><td>yes</td><td>auto</td><td class="e"></td></tr>
<tr><td>FORD TRANSIT OR S…</td><td class="r">15</td><td>Van(Full Size) - Inclusive GPS - Plus Ex…</td><td>Flexible Car…</td><td>Thu</td><td>10/08/2017</td><td>10:00</td><td>Fri</td><td>11/08/2017</td><td>10:00</td><td class="r">1</td><td>On Air…</td><td>On Air…</td><td class="r">96.75</td><td class="r">96.75</td><td>Alamo</td><td>yes</td><td>auto</td><td class="e"></td></tr>
</table></div>
<!-- scrollbar -->
<div class="a" style="left:1573px;top:444px;width:17px;height:311px;background:repeating-conic-gradient(#fff 0 25%,#d4d0c8 0 50%) 0 0/2px 2px"></div>
<div class="btn" style="left:1573px;top:444px;width:17px;height:17px"><div class="tri" style="left:4px;top:6px;border-top:0;border-bottom:4px solid #000;border-left-width:4px;border-right-width:4px"></div></div>
<div class="btn" style="left:1573px;top:461px;width:17px;height:179px"></div>
<div class="btn" style="left:1573px;top:738px;width:17px;height:17px"><div class="tri" style="left:4px;top:6px;border-top-width:4px;border-left-width:4px;border-right-width:4px"></div></div>

<!-- status within panel -->
<div class="a" style="left:222px;top:782px;letter-spacing:.05px">First portion: 11.7 sec, total search time: 13.0 sec</div>
<div class="btn" style="left:1560px;top:778px;width:23px;height:21px;text-align:center;color:#1a5caa;font:bold 17px/19px 'Liberation Serif',serif">i</div>

<!-- bottom tabs -->
<div class="a" style="left:215px;top:805px;width:1378px;height:1px;background:#808080"></div>
<div class="a" style="left:215px;top:806px;width:877px;height:17px;background:#d4d0c8"></div>
<div class="bt" style="left:215px;width:53px">Summary</div>
<div class="bt" style="left:268px;width:41px">Search</div>
<div class="bt" style="left:309px;width:84px;background:#ccffcc;letter-spacing:-.25px">Acc 2A,3C MCO</div>
<div class="bt" style="left:393px;width:147px;background:#bbbbff">Acc 2A,2C MCO; 29/07/2017</div>
<div class="bt" style="left:540px;width:146px;background:#ccffcc">Acc 2A,2C MCO; 29/07/2018</div>
<div class="bt" style="left:686px;width:143px;background:#bbbbff">Acc 2A,3C TPA; 10/08/2018</div>
<div class="bt" style="left:829px;width:144px;background:#ccffcc">Acc 2A,3C TPA; 10/08/2017</div>
<div class="bt" style="left:973px;width:23px;background:#000080;color:#fff">Car</div>
<div class="bt" style="left:996px;width:96px;letter-spacing:-.3px">Financial Summary</div>

<!-- status bar -->
<div class="a" style="left:806px;top:831px;letter-spacing:-.15px">User: 446 - Clark Silk</div>
<div class="a" style="left:917px;top:831px">Retailer: 'Ocean-Florida'</div>
<div class="a" style="left:1042.700px;top:831px">Client: none</div>
<div class="a" style="right:9px;top:831px;letter-spacing:-.35px">21:06 GMT</div>
<div class="a" style="left:0;top:858px;width:1600px;height:2px;background:#404040"></div>
</body></html>
